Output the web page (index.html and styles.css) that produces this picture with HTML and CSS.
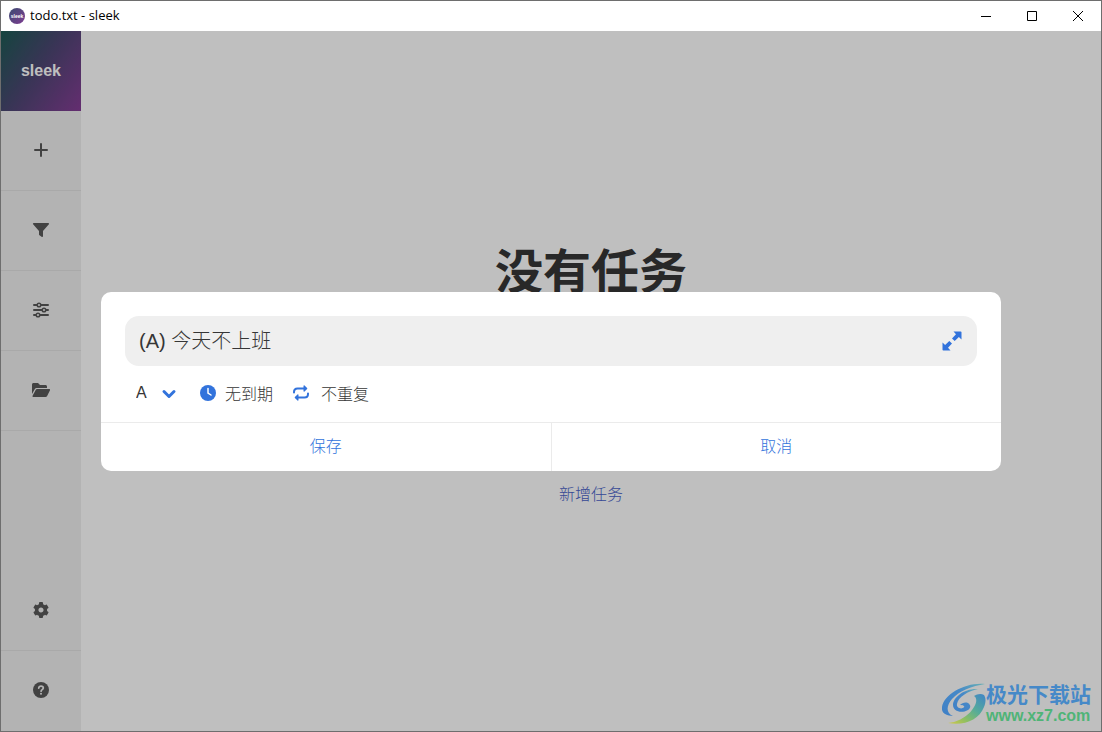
FILE: index.html
```html
<!DOCTYPE html>
<html lang="zh-CN">
<head>
<meta charset="utf-8">
<title>todo.txt - sleek</title>
<link rel="stylesheet" href="styles.css">
</head>
<body>
<div class="window">
  <header class="titlebar">
    <span class="app-icon">sleek</span>
    <span class="title">todo.txt - sleek</span>
    <div class="window-controls">
      <button type="button" aria-label="最小化"><svg viewBox="0 0 12 12"><path d="M1 6.500h10"/></svg></button>
      <button type="button" aria-label="最大化"><svg viewBox="0 0 12 12"><path d="M1.500 1.500h9v9h-9z"/></svg></button>
      <button type="button" aria-label="关闭"><svg viewBox="0 0 12 12"><path d="M1 1l10 10M11 1L1 11"/></svg></button>
    </div>
  </header>
  <div class="body">
    <nav class="sidebar">
      <a class="logo" href="#">sleek</a>
      <button class="nav-item" type="button" aria-label="新增"><svg viewBox="0 0 18 18"><path class="line" d="M9 3v12M3 9h12"/></svg></button>
      <button class="nav-item" type="button" aria-label="筛选"><svg viewBox="0 0 18 18"><path d="M1.700 2h14.600c.7 0 1 .8.6 1.300L11 10v5.300c0 .6-.6.9-1.100.6L7.500 14.200c-.3-.2-.5-.5-.5-.8V10L1.100 3.300C.7 2.800 1 2 1.700 2z"/></svg></button>
      <button class="nav-item" type="button" aria-label="显示"><svg viewBox="0 0 18 18"><path class="line bars" d="M2 4h3M9 4h7M2 9h8M14 9h2M2 14h2M8 14h8"/><g class="ring"><circle cx="7" cy="4" r="1.800"/><circle cx="12" cy="9" r="1.800"/><circle cx="6" cy="14" r="1.800"/></g></svg></button>
      <button class="nav-item" type="button" aria-label="打开"><svg viewBox="0 0 18 18"><path d="M0 3.500C0 2.700.7 2 1.500 2H6l2 2h5.500c.8 0 1.500.7 1.500 1.500V7H5C4 7 3.200 7.500 2.700 8.300L0 13z"/><path d="M5 8h12.300c.6 0 1 .6.7 1.200l-3 6c-.3.500-.8.800-1.400.8H1.200c-.6 0-1-.6-.6-1.200l3.200-6.100c.2-.4.700-.7 1.200-.7z"/></svg></button>
      <button class="nav-item push" type="button" aria-label="设置"><svg viewBox="-26 -26 564 564"><path d="M487.400 315.700l-42.600-24.600c4.300-23.200 4.300-47 0-70.200l42.600-24.600c4.900-2.800 7.100-8.600 5.500-14-11.100-35.600-30-67.800-54.700-94.600-3.800-4.100-10-5.100-14.800-2.300L380.800 110c-17.900-15.400-38.500-27.300-60.800-35.100V25.800c0-5.600-3.900-10.500-9.400-11.700-36.700-8.200-74.300-7.800-109.200 0-5.500 1.200-9.400 6.100-9.400 11.700V75c-22.200 7.900-42.800 19.800-60.800 35.100L88.700 85.500c-4.900-2.800-11-1.900-14.800 2.300-24.700 26.700-43.600 58.900-54.700 94.600-1.700 5.400.6 11.200 5.500 14L67.300 221c-4.300 23.200-4.300 47 0 70.200l-42.600 24.600c-4.900 2.800-7.100 8.600-5.500 14 11.100 35.600 30 67.800 54.700 94.600 3.800 4.100 10 5.100 14.800 2.300l42.600-24.600c17.900 15.400 38.500 27.300 60.800 35.100v49.200c0 5.600 3.900 10.500 9.400 11.700 36.700 8.200 74.300 7.800 109.200 0 5.500-1.200 9.400-6.100 9.400-11.700v-49.200c22.200-7.900 42.800-19.800 60.800-35.100l42.600 24.600c4.900 2.800 11 1.900 14.800-2.300 24.700-26.700 43.600-58.900 54.700-94.600 1.500-5.500-.7-11.300-5.600-14.100zM256 336c-44.100 0-80-35.900-80-80s35.900-80 80-80 80 35.900 80 80-35.900 80-80 80z"/></svg></button>
      <button class="nav-item" type="button" aria-label="帮助"><svg viewBox="0 0 18 18"><circle cx="9" cy="9" r="8"/><path class="mark" d="M6.700 7.100c.2-1.300 1.100-1.900 2.300-1.900 1.400 0 2.300.8 2.300 1.900 0 1.500-2.200 1.600-2.200 3.100"/><circle class="dot" cx="9" cy="12.700" r="1"/></svg></button>
    </nav>
    <main class="content">
      <h1>没有任务</h1>
      <a class="add-link" href="#">新增任务</a>
    </main>
    <div class="overlay">
      <form class="modal" role="dialog" aria-label="编辑任务">
        <div class="modal-body">
          <div class="field">
            <input type="text" aria-label="任务" value="(A) 今天不上班">
            <button class="expand" type="button" aria-label="展开"><svg viewBox="0 0 20 20"><path d="M11.500.5h7.200c.5 0 .8.300.8.800v7.200l-2.600-2.400-4.200 4-2.700-2.700 4-4.200zM8.500 19.500H1.300c-.5 0-.8-.3-.8-.8v-7.200l2.600 2.400 4.200-4L10 12.600l-4 4.200z"/></svg></button>
          </div>
          <div class="options">
            <div class="select">
              <select aria-label="优先级"><option>A</option></select>
              <svg viewBox="0 0 16 16"><path d="M3 5.500l5 5 5-5"/></svg>
            </div>
            <button class="option" type="button"><svg viewBox="0 0 16 16"><circle cx="8" cy="8" r="8"/><path class="hands" d="M8 3.500V8l3 2"/></svg>无到期</button>
            <button class="option repeat" type="button"><svg viewBox="0 0 16 16"><path class="loop" d="M1 7.500V7c0-2 1.500-3.500 3.500-3.500H12M15 8.500V9c0 2-1.500 3.500-3.500 3.500H4"/><path d="M10.500.9c0-.6.6-.8 1-.4l2.600 2.500c.3.300.3.700 0 1l-2.600 2.500c-.4.400-1 .2-1-.4zM5.500 15.100c0 .6-.6.8-1 .4L1.900 13c-.3-.3-.3-.7 0-1l2.600-2.500c.4-.4 1-.2 1 .4z"/></svg>不重复</button>
          </div>
        </div>
        <footer class="actions">
          <button type="button">保存</button>
          <button type="button">取消</button>
        </footer>
      </form>
    </div>
  </div>
  <div class="watermark">
    <svg viewBox="0 0 44 42">
      <defs>
        <linearGradient id="sky" x1="0" y1="1" x2="1" y2="0"><stop offset="0" stop-color="#3f80c6"/><stop offset=".6" stop-color="#4689c8"/><stop offset="1" stop-color="#68b0b4"/></linearGradient>
        <linearGradient id="tail" x1="1" y1="0" x2="0" y2="1"><stop offset="0" stop-color="#4083c8"/><stop offset=".4" stop-color="#55ab9a"/><stop offset=".7" stop-color="#8dbf62"/><stop offset="1" stop-color="#d2c84a"/></linearGradient>
      </defs>
      <path fill="url(#sky)" d="M43 1C24-1 2 11 0 24c-1 6 4 9 11 9-7-3-7-10-1-17C17 8 30 3 43 1z"/>
      <path fill="url(#sky)" d="M36 6c-13-1-25 8-25 16 0 6 8 9 15 5 3-2 3-5 0-7-3-1-6 0-8 2 3 0 5 1 4 2-2 3-8 1-7-3 1-7 11-13 21-15z"/>
      <path fill="url(#tail)" d="M42 12c-3-2-7-1-10 1 3 2 3 6 0 11-4 7-11 12-20 15-2 0-4 1-6 1 16 3 31-3 36-16 2-5 2-9 0-12z"/>
    </svg>
    <div class="watermark-text"><strong>极光下载站</strong><span>www.xz7.com</span></div>
  </div>
</div>
</body>
</html>
```
FILE: styles.css
```css
* { box-sizing: border-box; }

body {
  margin: 0;
  color: #363636;
  font-family: "Liberation Sans", "Noto Sans CJK SC", sans-serif;
  font-size: 16px;
}

button {
  margin: 0;
  padding: 0;
  border: 0;
  background: none;
  color: inherit;
  font: inherit;
}

a { text-decoration: none; }

svg { display: block; flex: none; }

.window {
  position: relative;
  display: flex;
  flex-direction: column;
  min-height: 100vh;
  border: 1px solid #6e6e6e;
  background: #fff;
}

.titlebar {
  display: flex;
  align-items: center;
  height: 30px;
  padding-left: 8px;
  gap: 5px;
  color: #000;
  font-family: "Open Sans", sans-serif;
  font-size: 13px;
}

.app-icon {
  display: flex;
  align-items: center;
  justify-content: center;
  width: 16px;
  height: 16px;
  border-radius: 50%;
  background: linear-gradient(135deg, #3b4a70, #7e3d92);
  color: #fff;
  font: bold 5px "Liberation Sans", sans-serif;
}

.title { line-height: 18px; padding-bottom: 2px; }

.window-controls { display: flex; margin-left: auto; }

.window-controls button {
  display: grid;
  place-items: center;
  width: 46px;
  height: 30px;
}

.window-controls svg {
  width: 12px;
  height: 12px;
  fill: none;
  stroke: #000;
}

.body {
  position: relative;
  display: flex;
  flex: 1;
}

.sidebar {
  display: flex;
  flex-direction: column;
  width: 80px;
  background: #efefef;
}

.logo {
  display: grid;
  place-items: center;
  height: 80px;
  background: linear-gradient(125deg, #1c5c54, #4b4772 45%, #863d96);
  color: #fff;
  font: bold 16px "Liberation Sans", sans-serif;
}

.nav-item {
  display: grid;
  place-items: center;
  height: 80px;
  padding-bottom: 2px;
  border-bottom: 1px solid #e2e2e2;
}

.nav-item:last-child { border-bottom: 0; }

.push { margin-top: auto; }

.nav-item svg {
  width: 18px;
  height: 18px;
  fill: #595959;
}

.nav-item .line { fill: none; stroke: #595959; stroke-width: 2; stroke-linecap: round; }
.ring { fill: none; stroke: #595959; stroke-width: 1.5; }
.mark { fill: none; stroke: #efefef; stroke-width: 1.7; stroke-linecap: round; }
.dot { fill: #efefef; }

.content {
  display: flex;
  flex: 1;
  flex-direction: column;
  align-items: center;
  justify-content: center;
  gap: 182px;
  padding-bottom: 11px;
}

h1 {
  margin: 0;
  font-size: 48px;
  font-weight: 700;
  line-height: 56px;
}

.add-link {
  color: #485fc7;
  font-weight: 300;
  line-height: 24px;
}

.overlay {
  position: absolute;
  inset: 0;
  display: flex;
  align-items: center;
  justify-content: center;
  padding: 0 100px;
  background: rgba(0, 0, 0, 0.25);
}

.modal {
  flex: 1;
  max-width: 900px;
  overflow: hidden;
  border-radius: 10px;
  background: #fff;
}

.modal-body { padding: 24px 24px 0; }

.field {
  display: flex;
  align-items: center;
  height: 50px;
  padding: 0 15px 0 14px;
  border-radius: 14px;
  background: #efefef;
}

.field input {
  flex: 1;
  min-width: 0;
  padding: 0 0 2px;
  border: 0;
  outline: 0;
  background: none;
  color: #363636;
  font: 300 20px "Liberation Sans", "Noto Sans CJK SC", sans-serif;
}

.expand svg { width: 20px; height: 20px; fill: #3273dc; }

.options {
  display: flex;
  align-items: center;
  height: 56px;
  padding: 0 0 2px 11px;
  font-weight: 300;
}

.select {
  position: relative;
  width: 64px;
}

.select select {
  display: block;
  width: 100%;
  height: 24px;
  padding: 0;
  border: 0;
  appearance: none;
  background: none;
  color: inherit;
  font: inherit;
}

.select svg {
  position: absolute;
  top: 5px;
  right: 23px;
  width: 16px;
  height: 16px;
  fill: none;
  stroke: #3273dc;
  stroke-width: 3;
  stroke-linecap: round;
  stroke-linejoin: round;
  pointer-events: none;
}

.option {
  display: flex;
  align-items: center;
  gap: 9px;
  margin-right: 20px;
}

.repeat { gap: 12px; }

.option svg { width: 16px; height: 16px; fill: #3273dc; }
.option .hands { fill: none; stroke: #fff; stroke-width: 1.5; stroke-linecap: round; }
.option .loop { fill: none; stroke: #3273dc; stroke-width: 2; stroke-linecap: round; }

.actions {
  display: flex;
  border-top: 1px solid #ebebeb;
}

.actions button {
  flex: 1;
  height: 48px;
  padding-bottom: 4px;
  color: #3273dc;
  font-weight: 300;
}

.actions button + button { border-left: 1px solid #ebebeb; }

.watermark {
  position: absolute;
  right: 10px;
  bottom: 6px;
  display: flex;
  align-items: center;
}

.watermark svg { width: 44px; height: 42px; }

.watermark-text {
  display: flex;
  flex-direction: column;
  color: #4689c8;
}

.watermark-text strong {
  font-size: 21px;
  font-weight: 700;
  line-height: 24px;
}

.watermark-text span {
  color: #4fb477;
  font: bold 16px/18px "Liberation Sans", sans-serif;
}
```
